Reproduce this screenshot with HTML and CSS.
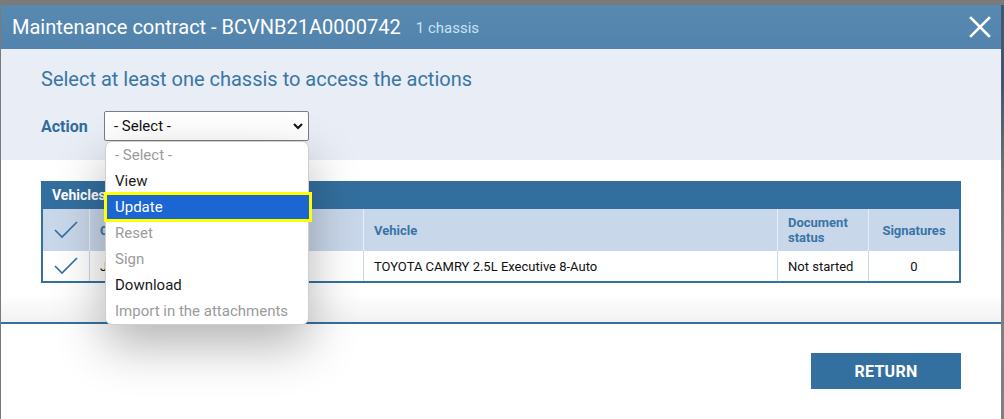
FILE: index.html
```html
<!DOCTYPE html>
<html>
<head>
<meta charset="utf-8">
<link rel="stylesheet" href="styles.css">
</head>
<body>
<div class="modal">
  <div class="modal-header">
    <span class="title">Maintenance contract - BCVNB21A0000742</span>
    <span class="count">1 chassis</span>
    <svg class="close" width="22" height="22" viewBox="0 0 22 22"><path d="M2 2 L20 20 M20 2 L2 20" stroke="#fff" stroke-width="2.6" stroke-linecap="square"/></svg>
  </div>
  <div class="actions-panel">
    <h2 class="hint">Select at least one chassis to access the actions</h2>
    <div class="action-row">
      <label class="action-label">Action</label>
      <div class="select-box">
        <span>- Select -</span>
        <svg width="10" height="7" viewBox="0 0 10 7"><path d="M1 1 L5 5 L9 1" fill="none" stroke="#111" stroke-width="2"/></svg>
      </div>
    </div>
  </div>
  <div class="content">
    <div class="vtable">
      <div class="vtable-title">Vehicles</div>
      <div class="vrow vhead">
        <div class="c c-check"><svg width="24" height="18" viewBox="0 0 24 18"><path d="M1 9 L8 16 L23 1" fill="none" stroke="#2f6ea3" stroke-width="1.6"/></svg></div>
        <div class="c c-chassis">C</div>
        <div class="c c-vehicle">Vehicle</div>
        <div class="c c-status">Document status</div>
        <div class="c c-sign">Signatures</div>
      </div>
      <div class="vrow vdata">
        <div class="c c-check"><svg width="24" height="18" viewBox="0 0 24 18"><path d="M1 9 L8 16 L23 1" fill="none" stroke="#2f6ea3" stroke-width="1.6"/></svg></div>
        <div class="c c-chassis">J</div>
        <div class="c c-vehicle">TOYOTA CAMRY 2.5L Executive 8-Auto</div>
        <div class="c c-status">Not started</div>
        <div class="c c-sign">0</div>
      </div>
    </div>
  </div>
  <div class="footer">
    <button class="btn-return">RETURN</button>
  </div>
  <ul class="dropdown">
    <li class="opt disabled">- Select -</li>
    <li class="opt">View</li>
    <li class="opt active">Update</li>
    <li class="opt disabled">Reset</li>
    <li class="opt disabled">Sign</li>
    <li class="opt">Download</li>
    <li class="opt disabled">Import in the attachments</li>
  </ul>
</div>
<div class="backdrop-edge"></div>
</body>
</html>
```

FILE: styles.css
```css
html, body {
  margin: 0;
  padding: 0;
}
body {
  width: 1004px;
  height: 419px;
  overflow: hidden;
  background: #7a7a7a;
  font-family: Roboto, "Liberation Sans", sans-serif;
  position: relative;
}
.backdrop-edge {
  position: absolute;
  right: 0;
  top: 5px;
  width: 3px;
  height: 414px;
  background: linear-gradient(#46566a 0%, #46566a 20%, #6a7076 40%, #7d7d7d 60%, #808080 100%);
}
.modal {
  position: relative;
  margin: 5px 0 0 1px;
  width: 1000px;
  height: 414px;
  background: #fff;
  display: flex;
  flex-direction: column;
}
.modal-header {
  height: 44px;
  flex: none;
  display: flex;
  align-items: center;
  padding: 0 10px 0 11px;
  background: linear-gradient(#5789b1, #5283ac);
  color: #fff;
}
.title {
  font-size: 20px;
}
.count {
  font-size: 15px;
  color: #c6e3f7;
  margin-left: 15px;
  margin-top: 2px;
}
.close {
  margin-left: auto;
  margin-right: 0;
}
.actions-panel {
  height: 111px;
  flex: none;
  box-sizing: border-box;
  background: #e8edf6;
  padding: 17px 40px 0 40px;
}
.hint {
  margin: 0;
  font-weight: 400;
  font-size: 20px;
  line-height: 26px;
  color: #3a76a5;
}
.action-row {
  display: flex;
  align-items: center;
  margin-top: 19px;
}
.action-label {
  font-weight: 700;
  font-size: 16px;
  color: #2f6c9c;
  width: 63px;
}
.select-box {
  width: 205px;
  height: 30px;
  box-sizing: border-box;
  border: 1px solid #7d7d7d;
  border-radius: 2px;
  background: #fff;
  display: flex;
  align-items: center;
  justify-content: space-between;
  padding: 0 5px 0 9px;
  font-size: 15px;
  color: #111;
}
.content {
  height: 164px;
  flex: none;
  box-sizing: border-box;
  padding: 21px 40px 0 40px;
  background: linear-gradient(#fff 0%, #fff 82%, #f2f2f2 100%);
  border-bottom: 2px solid #3470a0;
}
.vtable {
  width: 920px;
  box-sizing: border-box;
  border: 2px solid #34719f;
  border-top: none;
}
.vtable-title {
  height: 28px;
  margin: 0 -2px;
  padding-left: 11px;
  background: #336f9e;
  color: #fff;
  font-weight: 700;
  font-size: 14px;
  line-height: 28px;
}
.vrow {
  display: flex;
}
.vhead {
  height: 42px;
  background: #c9d7ea;
  color: #3874a6;
  font-weight: 700;
  font-size: 13px;
}
.vdata {
  height: 30px;
  background: #fff;
  color: #111;
  font-size: 13px;
}
.c {
  display: flex;
  align-items: center;
  box-sizing: border-box;
  border-left: 1px solid #e9eef6;
  padding: 0 10px;
  line-height: 15px;
}
.vdata .c {
  border-left-color: #c9d7ea;
}
.c-check {
  width: 46px;
  border-left: none;
  justify-content: center;
  padding: 0;
}
.c-chassis { width: 274px; }
.c-vehicle { width: 414px; }
.c-status { width: 91px; }
.c-sign { width: 91px; justify-content: center; }
.footer {
  flex: 1;
  display: flex;
  justify-content: flex-end;
  align-items: flex-start;
  padding: 29px 40px 0 0;
}
.btn-return {
  width: 150px;
  height: 36px;
  border: none;
  background: #33709f;
  color: #fff;
  font-family: Roboto, "Liberation Sans", sans-serif;
  font-weight: 700;
  font-size: 16px;
  letter-spacing: 0.3px;
}
.dropdown {
  position: absolute;
  left: 104px;
  top: 136px;
  width: 204px;
  margin: 0;
  padding: 0;
  list-style: none;
  background: #fff;
  border: 1px solid #cfcfcf;
  border-radius: 7px;
  box-shadow: 0 20px 50px rgba(0, 0, 0, 0.3);
  box-sizing: border-box;
}
.opt {
  height: 26px;
  line-height: 26px;
  padding-left: 9px;
  font-size: 15px;
  color: #1a1a1a;
}
.opt.disabled {
  color: #9b9b9b;
}
.opt.active {
  background: #1b66d3;
  color: #fff;
  outline: 3px solid #ffff00;
  outline-offset: -1px;
  position: relative;
  margin-right: -2px;
}
```
